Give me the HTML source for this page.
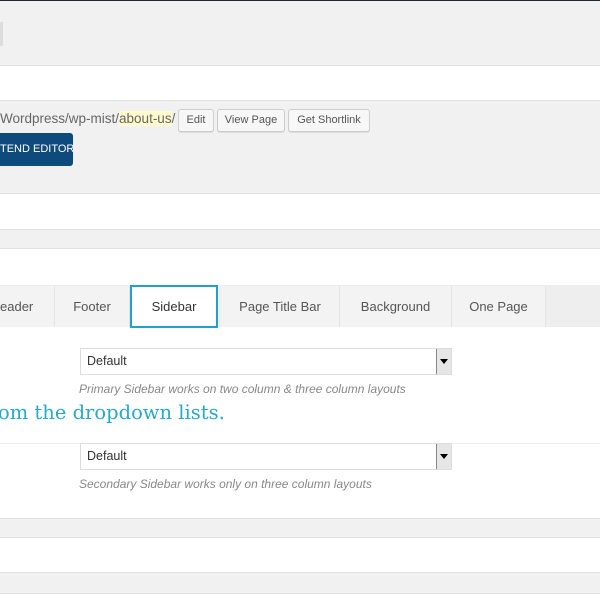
<!DOCTYPE html>
<html><head><style>
body{margin:0;width:600px;height:600px;overflow:hidden;background:#f1f1f1;font-family:"Liberation Sans",sans-serif;position:relative}
.a{position:absolute}
.btn{position:absolute;top:109px;height:21px;border:1px solid #ccc;border-radius:3px;background:#f7f7f7;font-size:11px;color:#555;line-height:21px;text-align:center;box-shadow:0 1px 0 #ddd}
.tab{position:absolute;top:286px;height:41px;background:#f3f3f3;border-right:1px solid #e4e4e4;font-size:13px;color:#555;line-height:41px;text-align:center}
.sel{position:absolute;left:80px;width:370px;height:25px;border:1px solid #ddd;background:#fff;font-size:12.5px;color:#333;line-height:25px;text-indent:6px}
.sel i{position:absolute;right:0;top:0;width:14px;height:25px;background:#e6e6e6;border-left:1px solid #888;}
.sel i:after{content:"";position:absolute;left:3px;top:10px;border:4px solid transparent;border-top:5px solid #000}
.help{position:absolute;left:79px;font-size:12px;font-style:italic;color:#888;white-space:nowrap}
</style></head><body>
<div class="a" style="left:0;top:0;width:600px;height:1px;background:#23282d"></div>
<div class="a" style="left:0;top:22px;width:3px;height:24px;background:#ddd"></div>
<div class="a" style="left:0;top:65px;width:600px;height:34px;background:#fff;border-top:1px solid #e2e2e2;border-bottom:1px solid #e2e2e2"></div>
<div class="a" style="left:0;top:111px;font-size:13.5px;color:#666;white-space:nowrap">Wordpress/wp-mist/<span style="background:#fffbcc">about-us</span>/</div>
<div class="btn" style="left:178px;width:34px">Edit</div>
<div class="btn" style="left:217px;width:66px">View Page</div>
<div class="btn" style="left:288px;width:80px">Get Shortlink</div>
<div class="a" style="left:0;top:133px;width:73px;height:33px;background:#0e4a7b;border-radius:0 3px 3px 0;color:#fff;font-size:11px;line-height:33px;overflow:hidden;white-space:nowrap">TEND EDITOR</div>
<div class="a" style="left:0;top:193px;width:600px;height:35px;background:#fff;border-top:1px solid #e2e2e2;border-bottom:1px solid #e2e2e2"></div>
<div class="a" style="left:0;top:248px;width:600px;height:269px;background:#fff;border-top:1px solid #e2e2e2;border-bottom:1px solid #e2e2e2"></div>
<div class="a" style="left:0;top:285px;width:600px;height:42px;background:#eeeeee"></div>
<div class="tab" style="left:0;width:54px;text-align:left">eader</div>
<div class="tab" style="left:55px;width:74px">Footer</div>
<div class="tab" style="left:221px;width:118px">Page Title Bar</div>
<div class="tab" style="left:340px;width:111px">Background</div>
<div class="tab" style="left:452px;width:93px">One Page</div>
<div class="a" style="left:130px;top:285px;width:84px;height:39px;background:#fff;border:2px solid #1fa2c7;font-size:13px;color:#333;line-height:39px;text-align:center">Sidebar</div>
<div class="sel" style="top:348px">Default<i></i></div>
<div class="help" style="top:382px">Primary Sidebar works on two column &amp; three column layouts</div>
<div class="a" style="left:0;top:443px;width:600px;height:1px;background:#eee"></div>
<div class="a" style="left:-2px;top:401px;font-family:'DejaVu Serif','Liberation Serif',serif;font-size:19.5px;color:#27a9cb;white-space:nowrap">om the dropdown lists.</div>
<div class="sel" style="top:443px">Default<i></i></div>
<div class="help" style="top:477px">Secondary Sidebar works only on three column layouts</div>
<div class="a" style="left:0;top:537px;width:600px;height:34px;background:#fff;border-top:1px solid #e2e2e2;border-bottom:1px solid #e2e2e2"></div>
<div class="a" style="left:0;top:593px;width:600px;height:7px;background:#fff;border-top:1px solid #e2e2e2"></div>
</body></html>
